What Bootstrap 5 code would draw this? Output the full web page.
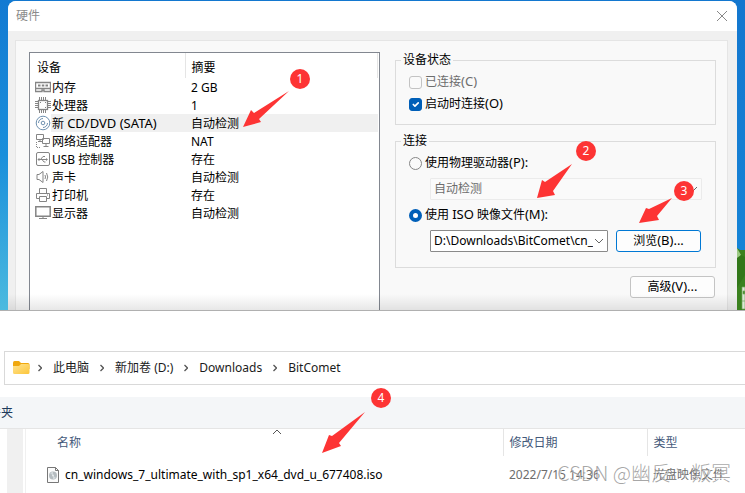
<!DOCTYPE html>
<html lang="zh-CN">
<head>
<meta charset="utf-8">
<meta name="viewport" content="width=device-width, initial-scale=1">
<title>硬件</title>
<link href="https://cdn.jsdelivr.net/npm/bootstrap@5.3.0/dist/css/bootstrap.min.css" rel="stylesheet">
<style>
body{font:12px/18px "Noto Sans","Noto Sans CJK SC",sans-serif;color:#000;background:#fff;min-height:100vh}
button,select,input{font:inherit}
.desktop{background:linear-gradient(#1377cf,#1583d6 80%,#1a86d8);padding:1px 8px 0;border-bottom:1px solid #b0b0b0}
.edge-left{inset:0 auto 0 0;width:16px;background:linear-gradient(#127ad2,#1a8fdb 50%,#4cbadf)}
.edge-right{right:0;bottom:0;width:8px;height:62px}
.dialog-box{background:#f0f0f0;border-radius:8px 8px 0 0}
.title-strip{background:#fff;border-radius:8px 8px 0 0;height:30px;padding:0 9px 0 8px;color:#8b8b8b}
.close-btn{width:12px;height:12px}
.dialog-inner{padding:9px 9px 0 7px}
.sheet{background:#f9f9f9;border:1px solid #e5e5e5;border-bottom:0;padding:11px 11px 0 13px;gap:15px}
.latin{font-size:13px;line-height:1}
.device-list{background:#fff;border:1px solid #828790;border-bottom:0;min-height:258px;padding-right:1px}
.device-list th{font-weight:400;height:25px;padding:5px 0 0 7px;border-right:1px solid #e5e5e5}
.device-list th + th{padding-left:6px}
.device-list td{height:18px;padding:0 0 0 5px}
.device-list td + td{padding:2px 0 0 6px;line-height:16px}
.device-list svg{width:16px;height:16px;flex:none}
.device-list .dev-name{padding:2px 0 0 1px;line-height:16px}
.picked .dev-name,.picked td + td{background:#f0f0f0}
.dev-col{width:155px}
.side{width:321px;flex:none}
.group-box{border:1px solid #dcdcdc;padding:3px 13px 9px}
.group-box.source-box{padding-bottom:15px}
.group-box legend{float:none;width:auto;font-size:12px;line-height:16px;margin:0 0 0 -8px;padding:0 2px}
.tick-row{height:22px;gap:3px}
.tick-row .form-check-input{width:13px;height:13px;margin:0;flex:none;border-color:#868686;background-color:#fafafa}
.tick-row .form-check-input:checked{background-color:#005fb8;border-color:#005fb8}
.tick-row .form-check-input[type=checkbox]{border-radius:3px}
.tick-row .form-check-input[type=radio]:checked{background-image:none;background-color:#fff;border:4px solid #005fb8}
.tick-row .form-check-input:disabled{border-color:#c3c3c3;opacity:1}
.tick-row .form-check-input:disabled + label{color:#6d6d6d;opacity:1}
.combo{height:22px;padding:0 14px 0 3px;font-size:12px;line-height:20px;border:1px solid #8a8a8a;border-radius:1px;color:#000;background:#fff url("data:image/svg+xml,%3Csvg xmlns='http://www.w3.org/2000/svg' viewBox='0 0 10 6'%3E%3Cpath d='M1 1l4 4 4-4' fill='none' stroke='%23666'/%3E%3C/svg%3E") no-repeat right 3px center/10px 6px}
.combo:disabled{border-color:#ebebeb;background-color:#fafafa;color:#6d6d6d}
.indent{margin-left:21px}
.push-btn{width:85px;height:22px;margin-right:1px;padding:0;font-size:12px;line-height:20px;background:#fdfdfd;border:1px solid #c4c4c4;border-radius:3px;color:#000}
.push-btn.focus-blue{border-color:#0078d4}
.fade-foot{inset:auto 8px 0;height:16px;background:linear-gradient(#0000,#00000018)}
.address{margin:40px 0 12px 4px;height:34px;padding:0 8px;border:1px solid #d9d9d9;border-right:0}
.address a{color:#1b1b1b;text-decoration:none}
.address ol{gap:11px}
.command-strip{height:32px;background:#f4f6f8;border-bottom:1px solid #e5e5e5}
.command-strip button{width:13px;font-size:12px;color:#1f3b5c}
.scroll-strip{width:16px;margin:0 2px 0 7px;background:#f0f0f0}
.file-pane{border-left:1px solid #f0f0f0;min-height:64px}
.file-pane th{font-weight:400;color:#44597a;height:27px;padding:0 6px;border-right:1px solid #e5e5e5}
.file-pane th:first-child{padding-left:31px}
.file-pane th:last-child{border:0}
.file-pane td{height:38px;padding:0 6px;color:#6d6d6d;white-space:nowrap}
.file-pane td:first-child{padding-left:20px;color:#000}
.file-pane td:first-child svg{margin-right:5px}
.sort-mark{left:50%;top:0;margin-left:8px}
.date-col{width:144px}.type-col{width:98px}
.notes{inset:0 auto auto 0;pointer-events:none}
.stamp{right:14px;bottom:9px;font:20px/24px "Noto Sans CJK SC",sans-serif;font-weight:300;color:#808080b0;white-space:nowrap;text-shadow:1px 1px 0 #ffffffb0;pointer-events:none}
</style>
<script src="https://cdn.jsdelivr.net/npm/bootstrap@5.3.0/dist/js/bootstrap.bundle.min.js"></script>
</head>
<body class="position-relative overflow-hidden">
<main class="desktop position-relative">
  <div class="edge-left position-absolute"></div>
  <svg class="edge-right position-absolute" viewBox="0 0 8 62"><path d="M0 0L3 2 8 2V62H0Z" fill="#3b811f"/><path d="M0 0l4 7-4 6z" fill="#9cc983"/><path d="M0 10l4-3 4 2v18L0 40z" fill="#327719"/><path d="M5 39h3v22H5zM6 43v3h2v-3zM5 53h3" fill="#dce9d6" stroke="#76a660" stroke-width=".7"/></svg>
  <section class="dialog-box position-relative" aria-label="硬件">
    <header class="title-strip d-flex align-items-center justify-content-between">
      <span>硬件</span>
      <button class="close-btn btn p-0 border-0 d-flex" aria-label="关闭"><svg width="12" height="12" viewBox="0 0 12 12"><path d="M1 1l10 10M11 1L1 11" stroke="#888" fill="none"/></svg></button>
    </header>
    <div class="dialog-inner">
      <div class="sheet d-flex">
        <div class="device-list flex-grow-1">
          <table class="w-100">
            <colgroup><col class="dev-col"><col></colgroup>
            <thead><tr><th scope="col">设备</th><th scope="col">摘要</th></tr></thead>
            <tbody>
              <tr><td><div class="d-flex align-items-center"><svg viewBox="0 0 16 16" fill="none" stroke="#858585"><path d="M.5 3.500h15v6H.5z" stroke-width="1.400"/><path d="M.5 9.500v3h6.500v-1.500h2v1.500h6.500v-3" stroke-width="1.400"/><path d="M3 6.500h2.500M6.800 6.500h2.500M10.500 6.500H13" stroke-width="2.200"/></svg><span class="dev-name flex-grow-1">内存</span></div></td><td>2 GB</td></tr>
              <tr><td><div class="d-flex align-items-center"><svg viewBox="0 0 16 16" fill="none" stroke="#858585"><rect x="3.500" y="3.500" width="9" height="9" stroke-width="1.300"/><path d="M4.500 0v3M6.500 0v3M8.500 0v3M10.500 0v3M4.500 13v3M6.500 13v3M8.500 13v3M10.500 13v3M0 4.500h3M0 6.500h3M0 8.500h3M0 10.500h3M13 4.500h3M13 6.500h3M13 8.500h3M13 10.500h3M5 5.500h1M10 5.500h1M10 10.500h1"/></svg><span class="dev-name flex-grow-1">处理器</span></div></td><td>1</td></tr>
              <tr class="picked"><td><div class="d-flex align-items-center"><svg viewBox="0 0 16 16" fill="none" stroke="#6f91b0"><circle cx="8" cy="8" r="6.800"/><circle cx="8" cy="8" r="1.800"/><path d="M3.500 8A4.500 4.500 0 0 1 8 3.500M12.500 8A4.500 4.500 0 0 1 8 12.500"/></svg><span class="dev-name flex-grow-1">新 <span class="latin">CD/DVD (SATA)</span></span></div></td><td>自动检测</td></tr>
              <tr><td><div class="d-flex align-items-center"><svg viewBox="0 0 16 16" fill="none" stroke="#858585"><path d="M1.500 1.500h7v5h-7zM3 8.500h4M5 7v1M7.500 5.500h7v5h-7z" fill="#fff"/><path d="M11 11v2M8.500 13.500h5"/><path d="M1.500 9v5M2 14.500h4" stroke-dasharray="1 1"/></svg><span class="dev-name flex-grow-1">网络适配器</span></div></td><td>NAT</td></tr>
              <tr><td><div class="d-flex align-items-center"><svg viewBox="0 0 16 16" fill="none" stroke="#858585"><rect x="1.500" y="1.500" width="13" height="13" rx="1.500"/><path d="M3 8.500h9M5.500 8.500L8 5.500h2M7 8.500l2 2.500h1.500"/><circle cx="4" cy="8.500" r=".8"/><path d="M11 7l2 1.500-2 1.500z" fill="#858585" stroke="none"/></svg><span class="dev-name flex-grow-1">USB 控制器</span></div></td><td>存在</td></tr>
              <tr><td><div class="d-flex align-items-center"><svg viewBox="0 0 16 16" fill="none" stroke="#858585"><path d="M2 5.500h2l4-3v11l-4-3H2zM10 6q1 2 0 4M11.500 4q2.500 4 0 8"/></svg><span class="dev-name flex-grow-1">声卡</span></div></td><td>自动检测</td></tr>
              <tr><td><div class="d-flex align-items-center"><svg viewBox="0 0 16 16" fill="none" stroke="#858585"><path d="M4.500 6V1.500h7V6M4 11.500H1.500v-5h13v5H12M4.500 9.500h7v5h-7zM12 8h1"/></svg><span class="dev-name flex-grow-1">打印机</span></div></td><td>存在</td></tr>
              <tr><td><div class="d-flex align-items-center"><svg viewBox="0 0 16 16" fill="none" stroke="#858585"><path d="M.8 1.800h14.400v9.400H.8z" stroke-width="1.500"/><path d="M8 11v2M4 13.500h8"/></svg><span class="dev-name flex-grow-1">显示器</span></div></td><td>自动检测</td></tr>
            </tbody>
          </table>
        </div>
        <div class="side">
          <fieldset class="group-box">
            <legend>设备状态</legend>
            <div class="tick-row d-flex align-items-center"><input class="form-check-input" type="checkbox" id="connected" disabled><label for="connected">已连接<span class="latin">(C)</span></label></div>
            <div class="tick-row d-flex align-items-center"><input class="form-check-input" type="checkbox" id="atstart" checked><label for="atstart">启动时连接<span class="latin">(O)</span></label></div>
          </fieldset>
          <fieldset class="group-box source-box mt-2">
            <legend>连接</legend>
            <div class="tick-row d-flex align-items-center"><input class="form-check-input" type="radio" name="source" id="physical"><label for="physical">使用物理驱动器<span class="latin">(P):</span></label></div>
            <div class="indent"><select class="combo form-select mt-1" aria-label="物理驱动器" disabled><option>自动检测</option></select></div>
            <div class="tick-row d-flex align-items-center my-1"><input class="form-check-input" type="radio" name="source" id="iso" checked><label for="iso">使用 <span class="latin">ISO</span> 映像文件<span class="latin">(M):</span></label></div>
            <div class="indent d-flex gap-2">
              <select class="combo form-select flex-grow-1" aria-label="ISO 映像文件"><option>D:\Downloads\BitComet\cn_</option></select>
              <button class="push-btn focus-blue btn flex-shrink-0">浏览<span class="latin">(B)...</span></button>
            </div>
          </fieldset>
          <div class="text-end mt-2"><button class="push-btn btn">高级<span class="latin">(V)...</span></button></div>
        </div>
      </div>
    </div>
  </section>
  <div class="fade-foot position-absolute"></div>
</main>
<section aria-label="文件">
  <nav class="address d-flex align-items-center" aria-label="路径">
    <svg class="me-2" width="17" height="14" viewBox="0 0 17 14"><defs><linearGradient id="fold" x2="1" y2="1"><stop stop-color="#ffe391"/><stop offset="1" stop-color="#fcc63b"/></linearGradient></defs><path d="M0 2q0-2 1.500-2H6l2 2h7q1.500 0 1.500 1.500V8H0z" fill="#f0a80e"/><path d="M0 5h6l2-2h7q1.500 0 1.500 1.500v7q0 1.500-1.500 1.500H1.500Q0 13 0 11.500z" fill="url(#fold)"/></svg>
    <ol class="list-unstyled d-flex align-items-center mb-0">
      <li><svg class="d-block" width="4" height="8" viewBox="0 0 4 8"><path d="M.5 1l3 3-3 3" fill="none" stroke="#555" stroke-width="1.300"/></svg></li>
      <li><a href="#">此电脑</a></li>
      <li><svg class="d-block" width="4" height="8" viewBox="0 0 4 8"><path d="M.5 1l3 3-3 3" fill="none" stroke="#555" stroke-width="1.300"/></svg></li>
      <li><a href="#">新加卷 (D:)</a></li>
      <li><svg class="d-block" width="4" height="8" viewBox="0 0 4 8"><path d="M.5 1l3 3-3 3" fill="none" stroke="#555" stroke-width="1.300"/></svg></li>
      <li><a href="#">Downloads</a></li>
      <li><svg class="d-block" width="4" height="8" viewBox="0 0 4 8"><path d="M.5 1l3 3-3 3" fill="none" stroke="#555" stroke-width="1.300"/></svg></li>
      <li><a href="#">BitComet</a></li>
    </ol>
  </nav>
  <div class="command-strip d-flex align-items-center"><button class="btn border-0 rounded-0 p-0 d-flex justify-content-end overflow-hidden text-nowrap">件夹</button></div>
  <div class="d-flex">
    <div class="scroll-strip flex-shrink-0"></div>
    <div class="file-pane flex-grow-1">
      <table class="w-100">
        <colgroup><col><col class="date-col"><col class="type-col"></colgroup>
        <thead><tr><th scope="col" class="position-relative">名称<svg class="sort-mark position-absolute" width="10" height="6" viewBox="0 0 10 6"><path d="M1 5l4-4 4 4" fill="none" stroke="#555"/></svg></th><th scope="col">修改日期</th><th scope="col">类型</th></tr></thead>
        <tbody><tr><td><div class="d-flex align-items-center"><svg width="14" height="16" viewBox="0 0 14 16"><path d="M1.500.5h8l3 3v12h-11z" fill="#fbfbfb" stroke="#777"/><path d="M9.500.5v3h3" fill="none" stroke="#777"/><circle cx="7" cy="8.500" r="4" fill="#b5bcc0"/><path d="M4 6l3 2.500V4.500zM10 11L7 8.500v4z" fill="#d3d9dc"/><circle cx="7" cy="8.500" r="1" fill="#e8ecee"/></svg>cn_windows_7_ultimate_with_sp1_x64_dvd_u_677408.iso</div></td><td>2022/7/15 14:36</td><td>光盘映像文件</td></tr></tbody>
      </table>
    </div>
  </div>
</section>
<svg class="notes position-absolute" width="745" height="493" viewBox="0 0 745 493" fill="#fd3434">
  <path d="M243 127L251 110l3 3L289 91L259 119l2 3zM537 198l5-18 3 2L572 164L553 191l2 4zM639 223l7-15 3 1L672 198L657 216l2 4zM322 453l7-18 3 1L365 412L339 443l2 3z"/>
  <circle cx="300" cy="79" r="10"/><circle cx="586" cy="151" r="10"/><circle cx="684" cy="191" r="10"/><circle cx="381" cy="398" r="10"/>
  <g fill="#fff" text-anchor="middle"><text x="300" y="83">1</text><text x="586" y="155">2</text><text x="684" y="195">3</text><text x="381" y="402">4</text></g>
</svg>
<div class="stamp position-absolute">CSDN @幽反丶叛冥</div>
</body>
</html>
